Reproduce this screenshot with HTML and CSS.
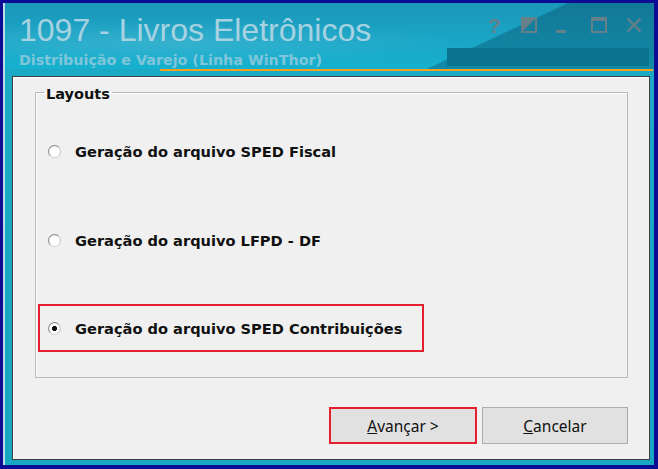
FILE: index.html
```html
<!DOCTYPE html>
<html lang="pt-BR">

<head>
    <meta charset="UTF-8">
    <meta name="viewport" content="width=device-width, initial-scale=1.0">
    <title>1097 - Livros Eletrônicos</title>
    <link rel="stylesheet" href="styles.css">
</head>

<body>

    <div class="window">
        <div class="titlebar">
            <div class="titles">
                <h1>1097 - Livros Eletrônicos</h1>
                <div class="subtitle">Distribuição e Varejo (Linha WinThor)</div>
            </div>

            <div class="side">
                <div class="controls">
                    <span class="help">?</span>
                    <svg class="ctl ctl-restore" width="16" height="16" viewBox="0 0 16 16">
                        <rect x="1" y="1" width="14" height="14" fill="none" stroke="currentColor" stroke-width="2" />
                        <polygon points="1,1 15,1 1,15" fill="currentColor" />
                    </svg>
                    <svg class="ctl ctl-min" width="10" height="16" viewBox="0 0 10 16">
                        <rect x="0" y="13" width="10" height="3" fill="currentColor" />
                    </svg>
                    <svg class="ctl ctl-max" width="16" height="16" viewBox="0 0 16 16">
                        <rect x="1" y="1" width="14" height="14" fill="none" stroke="currentColor" stroke-width="2" />
                        <rect x="1" y="1" width="14" height="3" fill="currentColor" />
                    </svg>
                    <svg class="ctl ctl-close" width="16" height="16" viewBox="0 0 16 16">
                        <path d="M1.5 1.5 L14.5 14.5 M14.5 1.5 L1.5 14.5" stroke="currentColor" stroke-width="2.4" fill="none" />
                    </svg>
                </div>
                <div class="bar"></div>
            </div>
        </div>

        <div class="accent"></div>

        <div class="content">
            <fieldset class="layouts">
                <legend>Layouts</legend>

                <label class="option">
                    <input type="radio" name="layout">
                    <span>Geração do arquivo SPED Fiscal</span>
                </label>

                <label class="option option-second">
                    <input type="radio" name="layout">
                    <span>Geração do arquivo LFPD - DF</span>
                </label>

                <!-- opção destacada -->
                <label class="option option-marked">
                    <input type="radio" name="layout" checked>
                    <span>Geração do arquivo SPED Contribuições</span>
                </label>
            </fieldset>

            <div class="actions">
                <button class="btn btn-marked"><u>A</u>vançar &gt;</button>
                <button class="btn"><u>C</u>ancelar</button>
            </div>
        </div>
    </div>

</body>

</html>
```

FILE: styles.css
```css
body {
    margin: 0;
    padding: 3px 4px 4px 3px;
    height: 469px;
    box-sizing: border-box;
    background-color: #0b0b93;
    font-family: "DejaVu Sans", sans-serif;
}

.window {
    height: 100%;
    display: flex;
    flex-direction: column;
    background: linear-gradient(180deg, #1ca9c5, #16a7c2);
    border-left: 2px solid #b9dde6;
}

.titlebar {
    height: 66px;
    box-sizing: border-box;
    display: flex;
    justify-content: space-between;
    padding: 0 5px 3px 14px;
    background:
        linear-gradient(155deg, rgba(0, 0, 0, 0) 0 71%, rgba(0, 55, 80, 0.32) 71.5% 100%),
        radial-gradient(ellipse 45% 35% at 25% 60%, rgba(255, 255, 255, 0.12), rgba(255, 255, 255, 0)),
        linear-gradient(180deg, #1b97b9 0%, #1aa4c5 50%, #16b1cf 100%);
}

.titles {
    padding-top: 10px;
}

h1 {
    margin: 0;
    font-family: "Liberation Sans", Arial, sans-serif;
    font-size: 32px;
    line-height: 34px;
    font-weight: normal;
    color: #a6d2e2;
    white-space: nowrap;
}

.subtitle {
    margin-top: 5px;
    font-size: 14.3px;
    line-height: 17px;
    font-weight: bold;
    color: #80c6da;
    white-space: nowrap;
}

.side {
    width: 202px;
    display: flex;
    flex-direction: column;
    justify-content: space-between;
}

.controls {
    display: flex;
    align-items: flex-start;
    padding-top: 14px;
    margin-left: 41px;
    color: #66808a;
}

.help {
    width: 12px;
    font-family: "Liberation Sans", Arial, sans-serif;
    font-size: 21px;
    line-height: 17px;
    font-weight: bold;
    color: #66808a;
}

.ctl {
    display: block;
}

.ctl-restore {
    margin-left: 21px;
}

.ctl-min {
    margin-left: 19px;
}

.ctl-max {
    margin-left: 25px;
}

.ctl-close {
    margin-left: 19px;
}

.bar {
    height: 18px;
    background-color: #0b7490;
}

.accent {
    height: 2px;
    margin: 0 1px 0 155px;
    background-color: #f4a11c;
}

.content {
    flex: 1;
    margin: 5px 4px 5px 7px;
    padding: 6px 21px 0 22px;
    display: flex;
    flex-direction: column;
    background-color: #f0f0f0;
    border: 1px solid #3f3f3f;
    box-shadow: inset 1px 1px 0 #ffffff;
}

.layouts {
    margin: 0;
    padding: 38px 0 25px 0;
    border: 1px solid #b9b9b9;
    box-shadow: inset 1px 1px 0 #ffffff;
    display: flex;
    flex-direction: column;
    align-items: flex-start;
}

legend {
    margin-left: 8px;
    padding: 4px 2px 0;
    font-size: 14.5px;
    line-height: 14px;
    font-weight: bold;
    color: #111;
}

.option {
    height: 24px;
    display: flex;
    align-items: center;
    gap: 14px;
    padding-left: 12px;
    font-size: 14.6px;
    font-weight: bold;
    color: #111;
    white-space: nowrap;
}

.option-second {
    margin-top: 65px;
}

.option-marked {
    margin: 52px 0 0 2px;
    width: 386px;
    height: 48px;
    box-sizing: border-box;
    padding-left: 8px;
    border: 2px solid #e5202e;
}

.option input {
    appearance: none;
    -webkit-appearance: none;
    margin: 0;
    width: 13px;
    height: 13px;
    border-radius: 50%;
    border: 1px solid #8a8a8a;
    border-right-color: #c4c4c4;
    border-bottom-color: #d0d0d0;
    box-sizing: border-box;
    background: radial-gradient(circle at 60% 60%, #ffffff 0 45%, #e6e6e6 100%);
}

.option input:checked {
    background: radial-gradient(circle, #111 0 2.3px, #ffffff 2.8px 48%, #e6e6e6 100%);
}

.actions {
    margin-top: 29px;
    display: flex;
    justify-content: flex-end;
    gap: 5px;
}

.btn {
    width: 146px;
    height: 37px;
    padding: 0;
    font-family: "Noto Sans", sans-serif;
    font-size: 15.5px;
    color: #111;
    background-color: #e1e1e1;
    border: 1px solid #adadad;
    cursor: pointer;
}

.btn-marked {
    width: 148px;
    border: 2px solid #e5202e;
}
```
